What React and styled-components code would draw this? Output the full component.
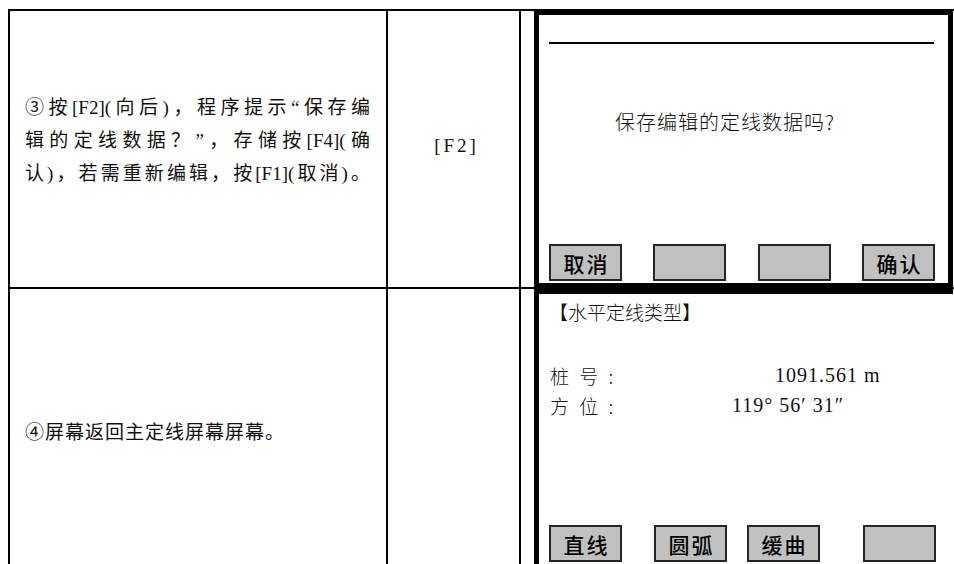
import React from 'react';
import styled, { createGlobalStyle } from 'styled-components';

const Global = createGlobalStyle`
  *, *::before, *::after { box-sizing: border-box; }
  html, body { margin: 0; padding: 0; background: #fff; overflow: hidden; }
  body {
    padding: 9px 0 0 8px;
    font-family: "Liberation Serif", "Noto Sans CJK SC", serif;
    color: #111;
  }
`;

const Table = styled.div`
  width: 970px;
  border-top: 2px solid #000;
  border-left: 2px solid #000;
`;

const Row = styled.div`
  display: grid;
  grid-template-columns: 378px 133px 1fr;
  height: ${p => p.$h}px;
  border-bottom: ${p => (p.$last ? 'none' : '2px solid #000')};
`;

const Cell = styled.div`
  border-right: 2px solid #000;
  display: flex;
  align-items: center;
  justify-content: ${p => p.$justify || 'flex-start'};
  padding: ${p => p.$pad || '0'};
  font-size: 19px;
`;

const ShotCell = styled.div`
  display: flex;
  flex-direction: column;
  padding-left: 13px;
`;

const Para = styled.div`
  width: 100%;
  line-height: 33px;
  text-align: justify;
  text-align-last: justify;
  font-size: 19px;
`;

const Line = styled.span`
  display: block;
`;

const Plain = styled.div`
  font-size: 19px;
  letter-spacing: ${p => p.$ls || 0}px;
  white-space: nowrap;
`;

const Screen = styled.div`
  flex: 1;
  width: 419px;
  display: flex;
  flex-direction: column;
  background: #fff;
  border-style: solid;
  border-color: #000;
  border-width: ${p => p.$bw};
  margin: ${p => p.$m || '0'};
  font-family: "Noto Sans CJK SC", "Liberation Serif", sans-serif;
  color: #111;
`;

const Rule = styled.div`
  height: 2px;
  background: #000;
  margin: 27px 14px 0 10px;
`;

const Message = styled.div`
  margin: 66px 0 0 76px;
  font-size: 20px;
  line-height: 24px;
  letter-spacing: 1px;
  font-weight: 300;
`;

const SoftKeys = styled.div`
  display: flex;
  justify-content: ${p => (p.$spread ? 'space-between' : 'flex-start')};
  margin-top: ${p => p.$top || 'auto'};
  padding: 0 13px 2px 10px;
`;

const SoftKey = styled.div`
  width: 73px;
  height: 37px;
  margin-left: ${p => p.$gap || 0}px;
  background: #c0c0c0;
  border: 2px solid #262626;
  display: flex;
  align-items: center;
  justify-content: center;
  font-size: 21px;
  font-weight: 500;
  letter-spacing: 2px;
  padding-left: 2px;
  color: #000;
`;

const Title = styled.div`
  margin: 6px 0 0 10px;
  font-size: 19px;
  line-height: 24px;
  font-weight: 300;
`;

const Fields = styled.div`
  margin: 36px 0 0 11px;
`;

const Field = styled.div`
  display: flex;
  height: 30px;
  align-items: center;
`;

const Label = styled.span`
  width: 70px;
  font-size: 19px;
  font-weight: 300;
  letter-spacing: 3px;
  white-space: pre;
`;

const Value = styled.span`
  margin-left: ${p => p.$indent}px;
  font-family: "Liberation Serif", "Noto Sans CJK SC", serif;
  font-size: 20px;
  letter-spacing: 1px;
  white-space: pre;
`;

export default function App() {
  return (
    <>
      <Global />
      <Table>
        <Row $h={278}>
          <Cell $pad="0 16px 18px 15px">
            <Para>
              <Line>③按[F2](向后)，程序提示“保存编</Line>
              <Line>辑的定线数据？”，存储按[F4](确</Line>
              <Line>认)，若需重新编辑，按[F1](取消)。</Line>
            </Para>
          </Cell>
          <Cell $justify="center" $pad="0 0 6px 6px">
            <Plain $ls={3}>[F2]</Plain>
          </Cell>
          <ShotCell>
            <Screen $bw="6px 5px 6px 5px" $m="-2px 0 -2px 0">
              <Rule />
              <Message>保存编辑的定线数据吗?</Message>
              <SoftKeys $spread>
                <SoftKey>取消</SoftKey>
                <SoftKey />
                <SoftKey />
                <SoftKey>确认</SoftKey>
              </SoftKeys>
            </Screen>
          </ShotCell>
        </Row>
        <Row $h={282} $last>
          <Cell $pad="0 0 0 15px">
            <Plain $ls={1}>④屏幕返回主定线屏幕屏幕。</Plain>
          </Cell>
          <Cell />
          <ShotCell>
            <Screen $bw="5px 0 0 5px">
              <Title>【水平定线类型】</Title>
              <Fields>
                <Field>
                  <Label>桩 号 :</Label>
                  <Value $indent={155}>1091.561 m</Value>
                </Field>
                <Field>
                  <Label>方 位 :</Label>
                  <Value $indent={112}>119° 56′ 31″</Value>
                </Field>
              </Fields>
              <SoftKeys $top="105px">
                <SoftKey>直线</SoftKey>
                <SoftKey $gap={32}>圆弧</SoftKey>
                <SoftKey $gap={20}>缓曲</SoftKey>
                <SoftKey $gap={43} />
              </SoftKeys>
            </Screen>
          </ShotCell>
        </Row>
      </Table>
    </>
  );
}
